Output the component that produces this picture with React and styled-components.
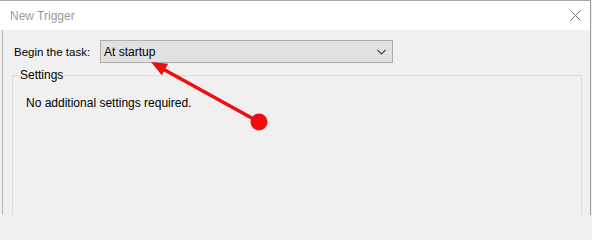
import React from 'react';
import styled, { createGlobalStyle } from 'styled-components';

const Global = createGlobalStyle`
html, body {
  margin:0;
  padding:0;
  background:#f0f0f0;
}
body {
  font-family:"Liberation Sans", Arial, sans-serif;
  font-size:12px;
  color:#000;
  overflow:hidden;
}
`;

const Frame = styled.div`
position:relative;
width:591px;
height:215px;
border-top:1px solid #a9a9a9;
border-right:1px solid #9a9a9a;
background:#f0f0f0;
box-sizing:border-box;
overflow:hidden;
`;

const TitleBar = styled.div`
height:29px;
display:flex;
align-items:center;
justify-content:space-between;
padding:0 9px 0 10px;
background:#fff;
`;

const Title = styled.div`
color:#9b9b9b;
font-size:12px;
`;

const CloseIcon = styled.svg`
width:11px;
height:11px;
margin-bottom:1px;
`;

const Body = styled.div`
margin-left:2px;
border-left:1px solid #b4b4b4;
height:186px;
padding:10px 9px 0 9px;
box-sizing:border-box;
`;

const Row = styled.div`
display:flex;
align-items:center;
gap:11px;
padding-left:2px;
`;

const Label = styled.div`
width:75px;
white-space:nowrap;
font-size:11.5px;
`;

const Combo = styled.div`
width:293px;
height:23px;
box-sizing:border-box;
display:flex;
align-items:center;
justify-content:space-between;
padding:0 4px 0 3px;
border:1px solid #adadad;
background:#e1e1e1;
font-size:12px;
`;

const Chevron = styled.svg`
width:9px;
height:6px;
margin-right:2px;
`;

const Group = styled.fieldset`
margin:5px 0 0 0;
padding:0;
height:200px;
border:1px solid #dcdcdc;
width:570px;
box-sizing:border-box;
`;

const Legend = styled.legend`
margin-left:5px;
padding:0 2px;
font-size:12px;
`;

const GroupText = styled.div`
padding:14px 0 0 13px;
font-size:12px;
`;

const Overlay = styled.svg`
position:absolute;
left:0;
top:0;
width:592px;
height:215px;
pointer-events:none;
`;

export default function App() {
  return (
    <>
      <Global />
      <Frame>
        <TitleBar>
          <Title>New Trigger</Title>
          <CloseIcon viewBox="0 0 11 11">
            <path d="M0.5 0.5L10.5 10.5M10.5 0.5L0.5 10.5" stroke="#707070" strokeWidth="1" fill="none" />
          </CloseIcon>
        </TitleBar>
        <Body>
          <Row>
            <Label>Begin the task:</Label>
            <Combo>
              <span>At startup</span>
              <Chevron viewBox="0 0 9 6">
                <path d="M0.5 1L4.5 5L8.5 1" stroke="#404040" strokeWidth="1.1" fill="none" />
              </Chevron>
            </Combo>
          </Row>
          <Group>
            <Legend>Settings</Legend>
            <GroupText>No additional settings required.</GroupText>
          </Group>
        </Body>
        <Overlay viewBox="0 0 592 215">
          <line x1="259" y1="121" x2="163" y2="68" stroke="#f20d0d" strokeWidth="3.5" strokeLinecap="round" />
          <polygon points="151,61 161.8,74.2 168.2,62.8" fill="#f20d0d" />
          <circle cx="259" cy="121" r="8.5" fill="#f20d0d" />
        </Overlay>
      </Frame>
    </>
  );
}
